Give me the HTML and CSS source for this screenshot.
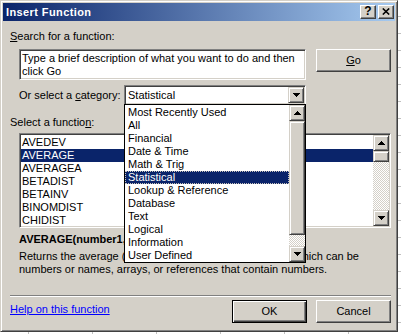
FILE: index.html
```html
<!DOCTYPE html>
<html>
<head>
<meta charset="utf-8">
<title>Insert Function</title>
<link rel="stylesheet" href="styles.css">
</head>
<body>
<div class="dialog">
  <div class="titlebar">
    <span class="title">Insert Function</span>
    <div class="caption-btns">
      <span class="cbtn help">?</span>
      <span class="cbtn close"><svg width="8" height="7" viewBox="0 0 8 7"><path d="M0.8 0.5L7.2 6.5M7.2 0.5L0.8 6.5" stroke="#000" stroke-width="1.6"/></svg></span>
    </div>
  </div>
  <div class="body">
    <div class="label"><u>S</u>earch for a function:</div>
    <div class="search-row">
      <div class="field search">Type a brief description of what you want to do and then<br>click Go</div>
      <button class="btn"><u>G</u>o</button>
    </div>
    <div class="cat-row">
      <span class="cat-label">Or select a <u>c</u>ategory:</span>
      <div class="field combo">
        <span class="combo-text">Statistical</span>
        <span class="sb-btn"><svg width="7" height="4" viewBox="0 0 7 4"><path d="M0 0h7v1h-1v1h-1v1h-1v1h-1v-1h-1v-1h-1v-1h-1z"/></svg></span>
        <div class="dropdown">
          <div class="dd-items">
            <div class="dd-item">Most Recently Used</div>
            <div class="dd-item">All</div>
            <div class="dd-item">Financial</div>
            <div class="dd-item">Date &amp; Time</div>
            <div class="dd-item">Math &amp; Trig</div>
            <div class="dd-item sel">Statistical</div>
            <div class="dd-item">Lookup &amp; Reference</div>
            <div class="dd-item">Database</div>
            <div class="dd-item">Text</div>
            <div class="dd-item">Logical</div>
            <div class="dd-item">Information</div>
            <div class="dd-item">User Defined</div>
          </div>
          <div class="vscroll">
            <span class="sb-btn"><svg width="7" height="4" viewBox="0 0 7 4"><path d="M0 4h7v-1h-1v-1h-1v-1h-1v-1h-1v1h-1v1h-1v1h-1z"/></svg></span>
            <span class="sb-thumb dd-thumb"></span>
            <span class="sb-track"></span>
            <span class="sb-btn"><svg width="7" height="4" viewBox="0 0 7 4"><path d="M0 0h7v1h-1v1h-1v1h-1v1h-1v-1h-1v-1h-1v-1h-1z"/></svg></span>
          </div>
        </div>
      </div>
    </div>
    <div class="label fn-label">Select a functio<u>n</u>:</div>
    <div class="field listbox">
      <div class="lb-items">
        <div class="lb-item">AVEDEV</div>
        <div class="lb-item sel">AVERAGE</div>
        <div class="lb-item">AVERAGEA</div>
        <div class="lb-item">BETADIST</div>
        <div class="lb-item">BETAINV</div>
        <div class="lb-item">BINOMDIST</div>
        <div class="lb-item">CHIDIST</div>
      </div>
      <div class="vscroll">
        <span class="sb-btn"><svg width="7" height="4" viewBox="0 0 7 4"><path d="M0 4h7v-1h-1v-1h-1v-1h-1v-1h-1v1h-1v1h-1v1h-1z"/></svg></span>
        <span class="sb-thumb lb-thumb"></span>
        <span class="sb-track"></span>
        <span class="sb-btn"><svg width="7" height="4" viewBox="0 0 7 4"><path d="M0 0h7v1h-1v1h-1v1h-1v1h-1v-1h-1v-1h-1v-1h-1z"/></svg></span>
      </div>
    </div>
    <div class="signature">AVERAGE(number1,number2,...)</div>
    <div class="desc">Returns the average (arithmetic mean) of its arguments, which can be numbers or names, arrays, or references that contain numbers.</div>
    <div class="separator"></div>
    <div class="bottom-row">
      <a class="help-link" href="#">Help on this function</a>
      <button class="btn default">OK</button>
      <button class="btn">Cancel</button>
    </div>
  </div>
</div>
</body>
</html>
```

FILE: styles.css
```css
* { box-sizing: border-box; }

body {
  margin: 0;
  width: 401px;
  height: 334px;
  overflow: hidden;
  font-family: "Liberation Sans", Arial, sans-serif;
  font-size: 11px;
  line-height: 13px;
  color: #000;
  background-color: #fff;
  background-image:
    repeating-linear-gradient(to right, transparent 0 28px, #c0c0c0 28px 29px, transparent 29px 64px),
    repeating-linear-gradient(to bottom, transparent 0 16px, #c0c0c0 16px 17px);
}

.dialog {
  width: 398px;
  height: 332px;
  background: #D4D0C8;
  border: 1px solid;
  border-color: #D4D0C8 #404040 #404040 #D4D0C8;
  box-shadow: inset 1px 1px #fff, inset -1px -1px #808080;
  padding: 2px;
  display: flex;
  flex-direction: column;
}

.titlebar {
  height: 18px;
  display: flex;
  align-items: center;
  padding-left: 3px;
  background: linear-gradient(to right, #0A246A, #A6CAF0);
}

.title {
  flex: 1;
  color: #fff;
  font-weight: bold;
  letter-spacing: 0.4px;
}

.caption-btns {
  display: flex;
  gap: 2px;
  margin-right: 1px;
}

.cbtn {
  width: 16px;
  height: 14px;
  background: #D4D0C8;
  border: 1px solid;
  border-color: #fff #404040 #404040 #fff;
  box-shadow: inset -1px -1px #808080;
  display: flex;
  align-items: center;
  justify-content: center;
  font-weight: bold;
  font-size: 12px;
  padding-bottom: 1px;
}

.body {
  flex: 1;
  display: flex;
  flex-direction: column;
  padding: 9px 4px 0 7px;
}

.label { white-space: nowrap; }

.field {
  background: #fff;
  border: 1px solid;
  border-color: #808080 #fff #fff #808080;
  box-shadow: inset 1px 1px #404040, inset -1px -1px #D4D0C8;
}

.search-row {
  display: flex;
  align-items: flex-start;
  gap: 10px;
  margin-top: 6px;
  margin-left: 9px;
}

.search {
  width: 287px;
  height: 31px;
  padding: 2px;
  white-space: nowrap;
  overflow: hidden;
}

.btn {
  width: 75px;
  height: 23px;
  padding: 0;
  margin: 0;
  font: inherit;
  color: #000;
  background: #D4D0C8;
  border: 1px solid;
  border-color: #fff #404040 #404040 #fff;
  box-shadow: inset -1px -1px #808080;
  text-align: center;
}

.btn.default {
  border: 1px solid #000;
  box-shadow: inset 1px 1px #fff, inset -1px -1px #404040, inset -2px -2px #808080;
}

.cat-row {
  display: flex;
  align-items: center;
  margin-top: 5px;
  margin-left: 9px;
}

.cat-label {
  width: 105px;
  white-space: nowrap;
}

.combo {
  position: relative;
  width: 182px;
  height: 20px;
  padding: 1px;
  display: flex;
  align-items: center;
}

.combo-text {
  flex: 1;
  padding-left: 2px;
}

.sb-btn {
  width: 16px;
  height: 16px;
  flex: none;
  background: #D4D0C8;
  border: 1px solid;
  border-color: #D4D0C8 #404040 #404040 #D4D0C8;
  box-shadow: inset 1px 1px #fff, inset -1px -1px #808080;
  display: flex;
  align-items: center;
  justify-content: center;
}

.sb-btn svg { display: block; }

.dropdown {
  position: absolute;
  left: -1px;
  top: 100%;
  width: 182px;
  height: 159px;
  z-index: 5;
  background: #fff;
  border: 1px solid #000;
  display: flex;
}

.dd-items {
  flex: 1;
  padding-top: 1px;
}

.dd-item {
  height: 13px;
  padding-left: 3px;
  white-space: nowrap;
}

.dd-item.sel {
  background: #0A246A;
  color: #fff;
  outline: 1px dotted #C8C4BC;
  outline-offset: -1px;
}

.vscroll {
  width: 16px;
  flex: none;
  display: flex;
  flex-direction: column;
  background: repeating-conic-gradient(#fff 0 25%, #D4D0C8 0 50%) 0 0 / 2px 2px;
}

.sb-thumb {
  flex: none;
  background: #D4D0C8;
  border: 1px solid;
  border-color: #D4D0C8 #404040 #404040 #D4D0C8;
  box-shadow: inset 1px 1px #fff, inset -1px -1px #808080;
}

.dd-thumb { height: 114px; }
.lb-thumb { height: 11px; }

.sb-track { flex: 1; }

.fn-label { margin-top: 11px; }

.listbox {
  width: 372px;
  height: 95px;
  margin-top: 4px;
  margin-left: 9px;
  padding: 1px;
  display: flex;
  overflow: hidden;
}

.lb-items {
  flex: 1;
  padding-top: 1px;
  overflow: hidden;
}

.lb-item {
  height: 13px;
  padding-left: 1px;
}

.lb-item.sel {
  background: #0A246A;
  color: #fff;
}

.signature {
  margin-top: 5px;
  margin-left: 9px;
  font-weight: bold;
  white-space: nowrap;
}

.desc {
  margin-top: 4px;
  margin-left: 9px;
  width: 372px;
}

.separator {
  margin-top: 19px;
  width: 381px;
  height: 2px;
  border-top: 1px solid #808080;
  border-bottom: 1px solid #fff;
}

.bottom-row {
  display: flex;
  align-items: flex-start;
  gap: 9px;
  margin-top: 3px;
}

.help-link {
  flex: 1;
  margin-top: 3px;
  color: #0000FF;
  text-decoration: underline;
}
```
